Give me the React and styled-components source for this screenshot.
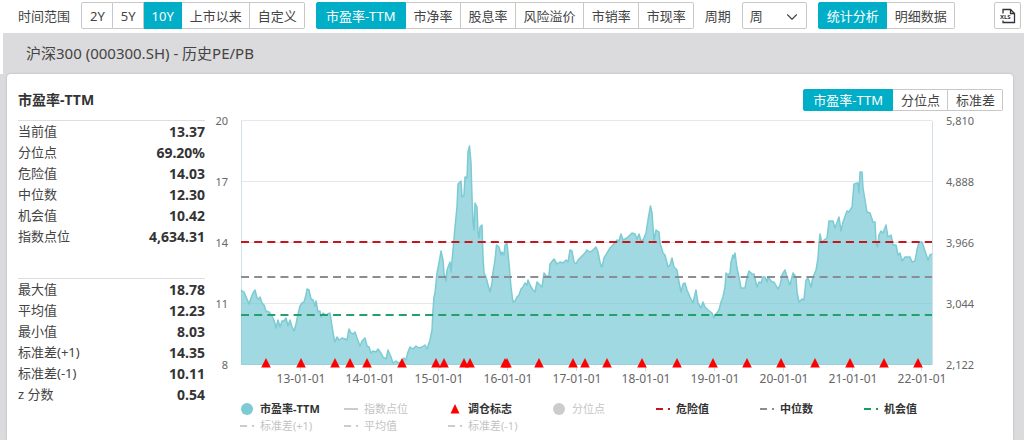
import { useState } from "react"
import styled, { createGlobalStyle, css } from "styled-components"
import { FiChevronDown } from "react-icons/fi"

const RANGES = ["2Y", "5Y", "10Y", "上市以来", "自定义"]
const METRICS = ["市盈率-TTM", "市净率", "股息率", "风险溢价", "市销率", "市现率"]
const VIEWS = ["统计分析", "明细数据"]
const SERIES = ["市盈率-TTM", "分位点", "标准差"]

const CURRENT_STATS = [
  ["当前值", "13.37"],
  ["分位点", "69.20%"],
  ["危险值", "14.03"],
  ["中位数", "12.30"],
  ["机会值", "10.42"],
  ["指数点位", "4,634.31"],
]

const HISTORY_STATS = [
  ["最大值", "18.78"],
  ["平均值", "12.23"],
  ["最小值", "8.03"],
  ["标准差(+1)", "14.35"],
  ["标准差(-1)", "10.11"],
  ["z 分数", "0.54"],
]

const LEGEND = [
  { label: "市盈率-TTM", shape: "circle", color: "#7ccbd2", on: true },
  { label: "指数点位", shape: "line", color: "#cccccc" },
  { label: "调仓标志", shape: "triangle", color: "#ff0000", on: true },
  { label: "分位点", shape: "circle", color: "#cccccc" },
  { label: "危险值", shape: "dash", color: "#c4161c", on: true },
  { label: "中位数", shape: "dash", color: "#8c8c94", on: true },
  { label: "机会值", shape: "dash", color: "#10a05c", on: true },
  { label: "标准差(+1)", shape: "dash", color: "#cccccc" },
  { label: "平均值", shape: "dash", color: "#cccccc" },
  { label: "标准差(-1)", shape: "dash", color: "#cccccc" },
]

const GRID = [
  { y: 121, left: "20", right: "5,810" },
  { y: 182, left: "17", right: "4,888" },
  { y: 243, left: "14", right: "3,966" },
  { y: 304, left: "11", right: "3,044" },
  { y: 365, left: "8", right: "2,122" },
]

const LEVELS = [
  { y: 242, color: "#c4161c" },
  { y: 277, color: "#8c8c94" },
  { y: 315, color: "#24a06a" },
]

const YEARS = [13, 14, 15, 16, 17, 18, 19, 20, 21, 22]

const MARKS = [
  266, 301, 335, 350, 367, 402, 436, 444, 464, 470, 505, 507, 539, 573, 585,
  607, 642, 677, 713, 747, 781, 815, 850, 884, 918,
]

const PE_LINE = `
  241,290 244,292 247,299 249,304 251,298 253,293 255,290 257,298 259,299 260,297
  262,303 264,305 266,311 269,312 272,316 274,320 276,328 278,320 280,327 282,321
  284,321 286,318 288,326 290,320 292,327 294,331 296,324 298,314 300,306 302,303
  304,302 306,295 307,289 309,290 311,299 313,300 315,306 316,301 318,312 320,311
  321,317 323,313 326,315 328,314 330,313 332,326 334,338 335,342 337,337 339,340
  342,338 345,339 347,340 349,329 351,333 353,334 355,332 357,338 360,346 362,341
  365,338 367,346 369,347 371,353 373,351 376,352 378,349 381,353 383,357 386,359
  388,350 391,357 393,363 396,361 399,363 402,361 404,358 406,360 408,352 410,347
  413,349 416,346 419,348 422,347 425,345 427,349 430,340 432,330 433,310 434,297
  435,293 437,273 439,263 441,251 443,260 444,273 446,281 447,270 450,262 451,272
  453,250 455,227 457,207 458,184 461,181 462,197 464,195 465,177 467,178 468,152
  469.5,146 471,163 472,197 473,222 474,230 475,203 477,207 478,233 479,238 480,227
  482,225 483,257 484,273 486,277 488,285 490,292 492,283 493,272 495,260 496.5,245
  499,247 501,255 502,252 504,255 505,245 507,243 509,263 511,287 513,302 515,301
  517,297 519,295 521,289 523,287 525,283 527,285 528,280 530,285 533,290 535,292
  537,282 539,284 542,287 544,273 547,277 549,275 550,264 554,259 557,264 560,262
  563,263 566,260 568,262 570,250 572,251 574,262 576,264 578,260 582,256 585,253
  587,250 590,252 593,250 596,247 598,252 600,262 601,266 602,267 604,258 607,253
  610,248 613,245 617,240 619,241 621,234 623,240 627,238 630,235 632,233 635,234
  637,239 639,234 641,241 643,240 646,233 648,220 650.5,206 652,213 654,241 656,230
  659,232 660,243 663,253 665,255 668,267 670,265 672,258 674,267 677,270 679,282
  681,292 683,284 685,283 687,290 690,297 693,303 696,290 698,303 701,308 703,302
  705,307 708,310 712,313 714,318 716,314 719,310 721,302 723,297 725,287 726,273
  728,275 730,273 731,262 733,255 734,258 735,253 737,268 739,277 741,288 745,288
  747,277 749,271 752,274 754,274 757,287 759,282 761,283 763,277 765,277 767,282
  768,277 772,282 774,282 778,289 780,285 782,275 785,270 787,277 790,285 793,273
  796,277 797,292 799,302 802,299 804,300 806,280 808,278 811,287 813,277 816,270
  818,258 819,243 820,234 822,243 824,240 827,238 829,221 833,221 835,228 839,217
  841,231 843,222 847,211 849,212 852,207 854,184 858,183 859,193 860,172 862,172
  863,188 865,200 867,212 870,213 873,222 875,222 876,242 877.5,247 879,235 881,231
  883,233 886,225 888,237 891,235 893,245 896,245 898,255 900,253 902,261 905,257
  910,257 912,262 915,261 917,250 919,242 922,242 924,248 927,257 928,260 930,255
  932,254`

export default function App() {
  const [range, setRange] = useState("10Y")
  const [metric, setMetric] = useState("市盈率-TTM")
  const [view, setView] = useState("统计分析")
  const [series, setSeries] = useState("市盈率-TTM")

  return (
    <Page>
      <GlobalStyle />
      <Toolbar>
        <span>时间范围</span>
        <Tabs items={RANGES} value={range} onChange={setRange} />
        <Tabs items={METRICS} value={metric} onChange={setMetric} />
        <label htmlFor="period">周期</label>
        <SelectBox>
          <select id="period" defaultValue="周">
            <option>日</option>
            <option>周</option>
            <option>月</option>
          </select>
          <FiChevronDown />
        </SelectBox>
        <Tabs items={VIEWS} value={view} onChange={setView} />
        <ExportButton aria-label="XLS">
          <XlsIcon />
        </ExportButton>
      </Toolbar>

      <Title>沪深300 (000300.SH) - 历史PE/PB</Title>
      <Content>
        <Card>
          <CardHeader>
            <h2>市盈率-TTM</h2>
            <Tabs small items={SERIES} value={series} onChange={setSeries} />
          </CardHeader>
          <CardBody>
            <Stats>
              <StatsTable rows={CURRENT_STATS} />
              <StatsTable rows={HISTORY_STATS} />
            </Stats>
            <ChartArea>
              <Chart />
              <Legend>
                {LEGEND.map((l) => (
                  <LegendItem key={l.label} $on={l.on}>
                    <LegendIcon shape={l.shape} color={l.color} />
                    {l.label}
                  </LegendItem>
                ))}
              </Legend>
            </ChartArea>
          </CardBody>
        </Card>
      </Content>
    </Page>
  )
}

function Tabs({ items, value, onChange, small }) {
  return (
    <Group>
      {items.map((item) => (
        <Tab
          key={item}
          $active={item === value}
          $small={small}
          $wide={item.endsWith("TTM")}
          onClick={() => onChange(item)}
        >
          {item}
        </Tab>
      ))}
    </Group>
  )
}

function StatsTable({ rows }) {
  return (
    <Table>
      <tbody>
        {rows.map(([name, value]) => (
          <tr key={name}>
            <th scope="row">{name}</th>
            <td>{value}</td>
          </tr>
        ))}
      </tbody>
    </Table>
  )
}

function Chart() {
  return (
    <ChartSvg viewBox="205 114 798 274">
      {GRID.map((g) => (
        <g key={g.y}>
          <line x1="241" x2="932" y1={g.y - 0.5} y2={g.y - 0.5} stroke="#e6e6ee" />
          <text x="228" y={g.y + 4} textAnchor="end">{g.left}</text>
          <text x="946" y={g.y + 4}>{g.right}</text>
        </g>
      ))}
      <path d="M241.5 121V365M932.5 121V365" stroke="#d3dfe8" />
      <polygon points={`241,365 ${PE_LINE} 932,365`} fill="#7ccbd6" fillOpacity="0.72" />
      <polyline points={PE_LINE} fill="none" stroke="#7ccbd2" strokeWidth="1.5" strokeLinejoin="round" />
      {LEVELS.map((l) => (
        <line key={l.y} x1="241" x2="932" y1={l.y} y2={l.y} stroke={l.color} strokeWidth="2" strokeDasharray="8 5.15" />
      ))}
      {YEARS.map((year, i) => (
        <g key={year}>
          <line x1={300.5 + i * 69} x2={300.5 + i * 69} y1="365" y2="371" stroke="#d5dce6" />
          <DateLabel x={301 + i * 69} y="383" textAnchor="middle">{year}-01-01</DateLabel>
        </g>
      ))}
      {MARKS.map((x) => (
        <path key={x} d={`M${x} 358L${x + 4.8} 367.5H${x - 4.8}Z`} fill="#ff0000" />
      ))}
    </ChartSvg>
  )
}

function LegendIcon({ shape, color }) {
  return (
    <svg width="16" height="12" viewBox="0 0 16 12" fill={color} stroke="none">
      {shape === "circle" && <circle cx="8" cy="6" r="6" />}
      {shape === "triangle" && <path d="M8 1L12.5 10.5H3.5Z" />}
      {shape === "line" && <rect x="1" y="5" width="14" height="2" />}
      {shape === "dash" && <path d="M1 5h7v2h-7zM13 5h2v2h-2z" />}
    </svg>
  )
}

function XlsIcon() {
  return (
    <svg width="16" height="16" viewBox="0 0 16 16" fill="none" stroke="#333" strokeWidth="1.3">
      <path d="M3 5.5V1.5H10.5L14.5 5.5V14.5H3V12.5" />
      <path d="M10.5 1.5V5.5H14.5" />
      <text x="0" y="11" fontSize="6" fontWeight="700" fill="#333" stroke="none">XLS</text>
    </svg>
  )
}

const GlobalStyle = createGlobalStyle`
  * {
    box-sizing: border-box;
  }
  body {
    margin: 0;
    background: #ffffff;
    color: #444444;
    font-family: "Noto Sans", "Noto Sans CJK SC", sans-serif;
    font-size: 13px;
  }
  button, select {
    font: inherit;
    color: inherit;
  }
`
const Page = styled.div`
  min-height: 100vh;
  display: flex;
  flex-direction: column;
`
const Toolbar = styled.header`
  display: flex;
  align-items: center;
  gap: 11px;
  height: 33px;
  padding: 0 3px 2px 18px;
  white-space: nowrap;
`
const Group = styled.div`
  display: flex;
`
const Tab = styled.button`
  height: ${(props) => (props.$small ? 22 : 27)}px;
  padding: ${(props) => (props.$wide ? "0 9px" : "0 7px 0 8px")};
  border: 1px solid #c8c8c8;
  border-left-width: 0;
  background: #ffffff;
  line-height: 18px;
  white-space: nowrap;
  cursor: pointer;
  &:first-child {
    border-left-width: 1px;
    border-radius: 2px 0 0 2px;
  }
  &:last-child {
    border-radius: 0 2px 2px 0;
  }
  ${(props) => props.$active && css`
    background: #00aec7;
    border-color: #00aec7;
    color: #ffffff;
  `}
`
const SelectBox = styled.div`
  position: relative;
  width: 65px;
  height: 27px;
  select {
    width: 100%;
    height: 100%;
    padding: 0 7px;
    border: 1px solid #c8c8c8;
    border-radius: 2px;
    background: #ffffff;
    appearance: none;
  }
  svg {
    position: absolute;
    top: 6px;
    right: 6px;
    width: 18px;
    height: 18px;
    stroke-width: 1.5;
    pointer-events: none;
  }
`
const ExportButton = styled.button`
  display: flex;
  align-items: center;
  justify-content: center;
  width: 27px;
  height: 27px;
  margin-left: auto;
  padding: 0;
  border: 1px solid #c8c8c8;
  border-radius: 2px;
  background: #ffffff;
`
const Title = styled.h1`
  margin: 0 0 0 3px;
  padding-left: 23px;
  background: #dbdadc;
  font-size: 15px;
  font-weight: 400;
  line-height: 41px;
`
const Content = styled.main`
  flex-grow: 1;
  display: flex;
  flex-direction: column;
  padding: 0 11px 0 7px;
  background: #dbdadc;
`
const Card = styled.section`
  flex-grow: 1;
  padding: 15px 10px 0 11px;
  border-radius: 4px 4px 0 0;
  background: #ffffff;
  box-shadow: 0 0 3px rgba(0, 0, 0, 0.15);
`
const CardHeader = styled.div`
  display: flex;
  align-items: center;
  justify-content: space-between;
  h2 {
    margin: 0;
    color: #333333;
    font-size: 14px;
    line-height: 22px;
  }
`
const CardBody = styled.div`
  display: flex;
  padding-top: 3px;
`
const Stats = styled.div`
  display: flex;
  flex-direction: column;
  gap: 31px;
  flex-shrink: 0;
  width: 187px;
  padding-top: 6px;
`
const Table = styled.table`
  width: 100%;
  border-collapse: collapse;
  border-top: 1px solid #dddddd;
  line-height: 21px;
  th {
    padding: 0;
    font-weight: 400;
    text-align: left;
  }
  td {
    padding: 0;
    color: #333333;
    font-size: 14px;
    font-weight: 700;
    text-align: right;
  }
`
const ChartArea = styled.div`
  flex-grow: 1;
  min-width: 0;
`
const ChartSvg = styled.svg`
  display: block;
  width: 100%;
  text {
    fill: #666666;
    font-size: 11px;
  }
`
const DateLabel = styled.text`
  && {
    font-size: 12px;
  }
`
const Legend = styled.ul`
  display: grid;
  grid-template-columns: repeat(7, 104px);
  margin: 0;
  padding: 12px 0 0 34px;
  list-style: none;
`
const LegendItem = styled.li`
  display: flex;
  align-items: center;
  gap: 5px;
  color: ${(props) => (props.$on ? "#333333" : "#c4c4c4")};
  font-size: 11px;
  font-weight: ${(props) => (props.$on ? 700 : 400)};
  line-height: 17px;
  white-space: nowrap;
`
